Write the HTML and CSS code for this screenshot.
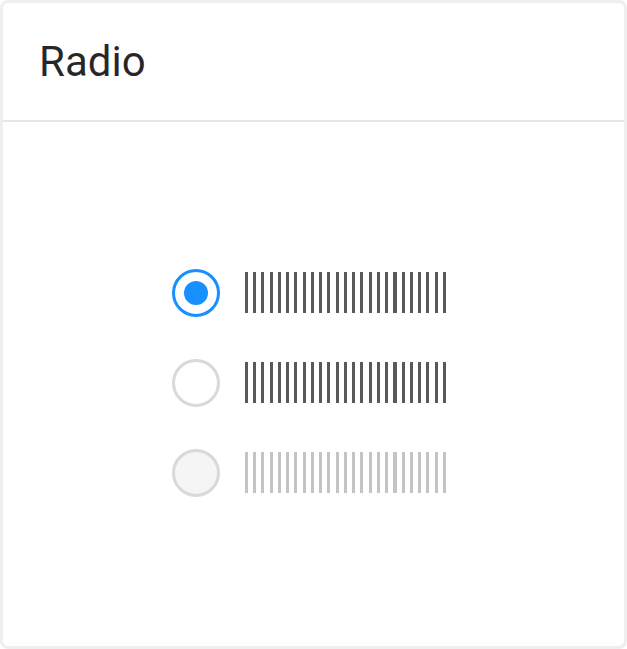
FILE: index.html
```html
<!DOCTYPE html>
<html lang="en">
<head>
<meta charset="utf-8">
<title>Radio</title>
<link rel="stylesheet" href="styles.css">
</head>
<body>
<div class="card">
  <div class="card-head">Radio</div>
  <div class="card-body">
    <div class="radio-group">
      <label class="radio checked">
        <span class="radio-inner"></span>
        <span class="radio-label" aria-label="Option A"></span>
      </label>
      <label class="radio">
        <span class="radio-inner"></span>
        <span class="radio-label" aria-label="Option B"></span>
      </label>
      <label class="radio disabled">
        <span class="radio-inner"></span>
        <span class="radio-label" aria-label="Option C"></span>
      </label>
    </div>
  </div>
</div>
</body>
</html>
```

FILE: styles.css
```css
html, body {
  margin: 0;
  padding: 0;
  background: #ffffff;
}

body {
  font-family: Roboto, "Liberation Sans", Arial, sans-serif;
}

.card {
  box-sizing: border-box;
  width: 627px;
  height: 649px;
  border: 3px solid #efefef;
  border-radius: 8px;
  background: #ffffff;
  display: flex;
  flex-direction: column;
}

.card-head {
  height: 117px;
  border-bottom: 2px solid #e6e6e6;
  display: flex;
  align-items: center;
  padding-left: 36px;
  font-size: 42px;
  color: rgba(0, 0, 0, 0.85);
}

.card-body {
  flex: 1;
  display: flex;
  align-items: center;
  justify-content: center;
  padding-right: 9px;
  padding-bottom: 3px;
}

.radio-group {
  display: flex;
  flex-direction: column;
  gap: 42px;
}

.radio {
  display: flex;
  align-items: center;
  height: 48px;
  gap: 25px;
}

.radio-inner {
  box-sizing: border-box;
  width: 48px;
  height: 48px;
  border-radius: 50%;
  border: 3px solid #d9d9d9;
  background: #ffffff;
  display: flex;
  align-items: center;
  justify-content: center;
}

.radio.checked .radio-inner {
  border-color: #1890ff;
}

.radio.checked .radio-inner::after {
  content: "";
  width: 24px;
  height: 24px;
  border-radius: 50%;
  background: #1890ff;
}

.radio.disabled .radio-inner {
  background: #f5f5f5;
  border-color: #d9d9d9;
}

.radio-label {
  width: 201px;
  height: 41px;
  background: repeating-linear-gradient(to right, #595959 0 3px, transparent 3px 8.25px);
}

.radio.disabled .radio-label {
  background: repeating-linear-gradient(to right, #c4c4c4 0 3px, transparent 3px 8.25px);
}
```
